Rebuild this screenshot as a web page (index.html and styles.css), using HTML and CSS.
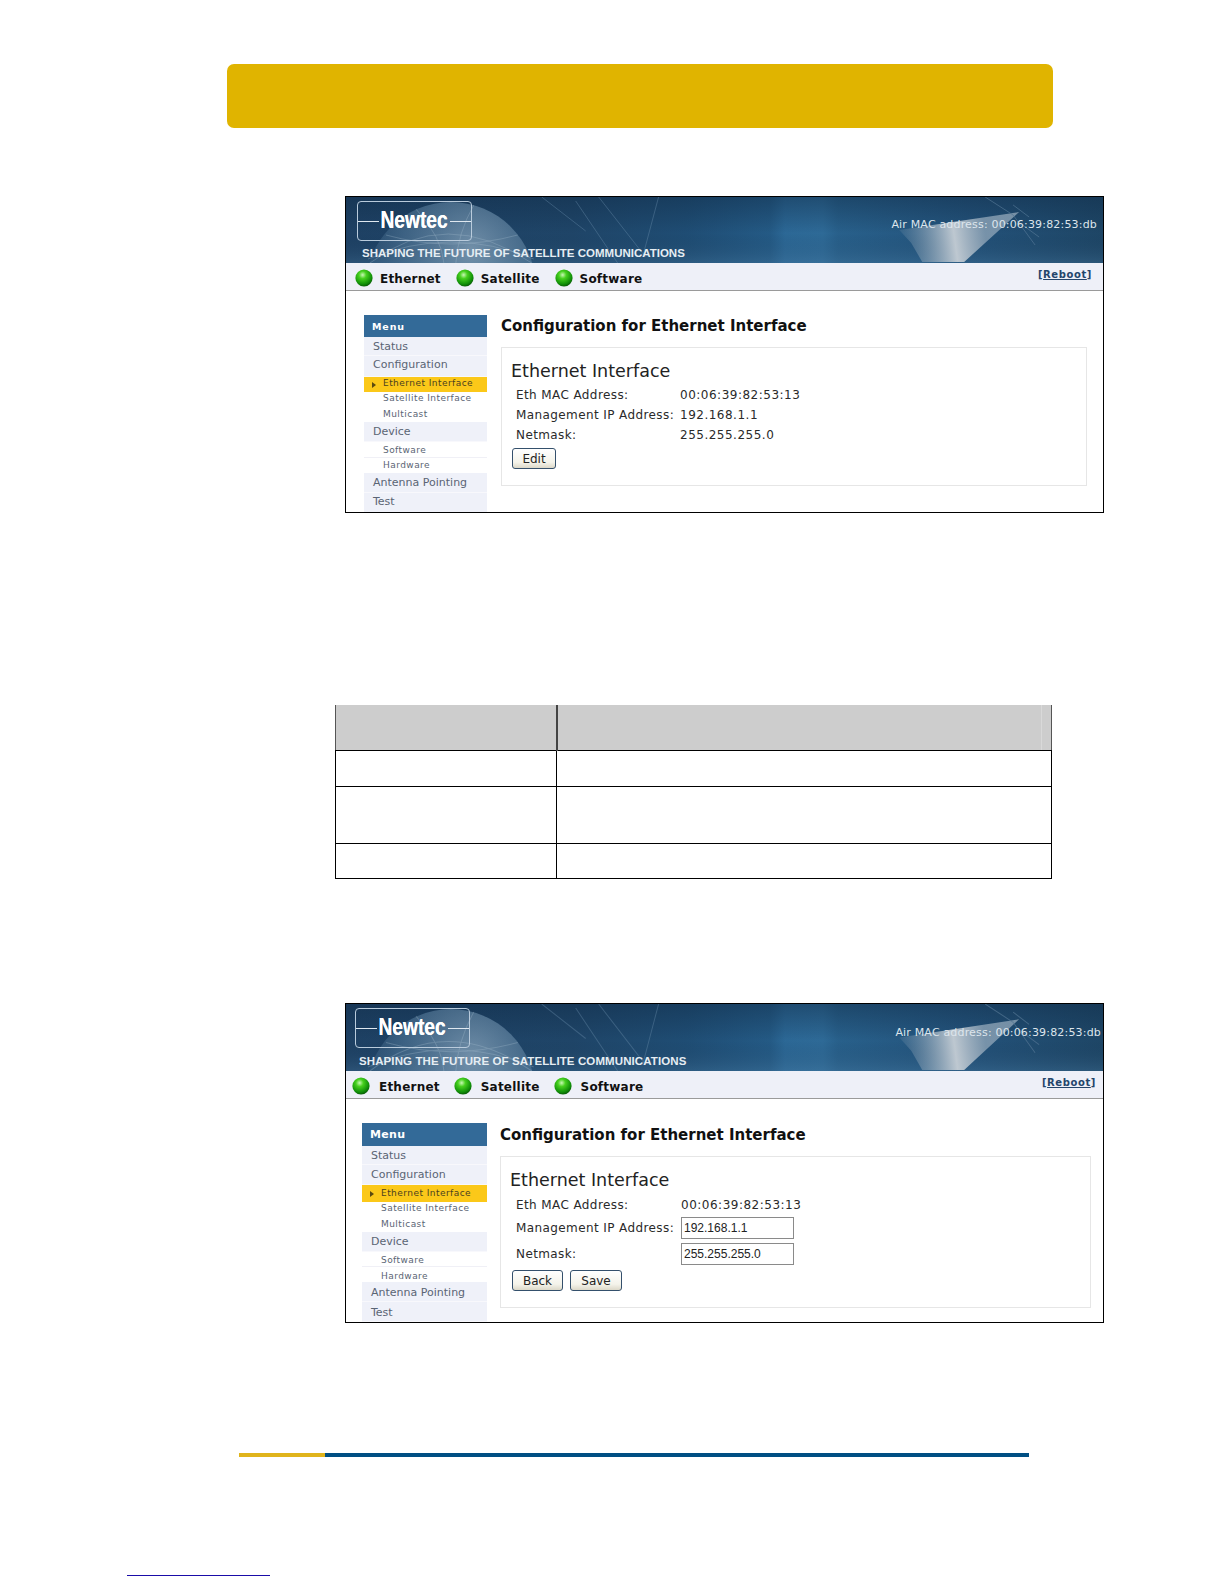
FILE: index.html
```html
<!DOCTYPE html>
<html lang="en">
<head>
<meta charset="utf-8">
<title>Configuration for Ethernet Interface</title>
<link rel="stylesheet" href="styles.css">
</head>
<body>
<svg class="defs" width="0" height="0" aria-hidden="true">
  <defs>
    <linearGradient id="bannerBg" x1="0" x2="1" y1="0" y2="0">
      <stop offset="0" stop-color="#1e4164"/>
      <stop offset=".3" stop-color="#1f4568"/>
      <stop offset=".45" stop-color="#1f4d74"/>
      <stop offset=".56" stop-color="#245a85"/>
      <stop offset=".58" stop-color="#2c6896"/>
      <stop offset=".63" stop-color="#2e6a97"/>
      <stop offset=".65" stop-color="#28608b"/>
      <stop offset=".82" stop-color="#23527a"/>
      <stop offset="1" stop-color="#1e4666"/>
    </linearGradient>
    <linearGradient id="bannerShade" x1="0" x2="0" y1="0" y2="1">
      <stop offset="0" stop-color="#0f2a45" stop-opacity=".45"/>
      <stop offset=".55" stop-color="#0f2a45" stop-opacity="0"/>
      <stop offset="1" stop-color="#4b7ba0" stop-opacity=".3"/>
    </linearGradient>
    <radialGradient id="globe" cx=".62" cy=".28" r=".75">
      <stop offset="0" stop-color="#86a2b9" stop-opacity=".8"/>
      <stop offset=".55" stop-color="#557b9b" stop-opacity=".55"/>
      <stop offset="1" stop-color="#2f5578" stop-opacity=".25"/>
    </radialGradient>
    <linearGradient id="beam" gradientUnits="userSpaceOnUse" x1="552" y1="48" x2="640" y2="36">
      <stop offset="0" stop-color="#7d98ae" stop-opacity=".1"/>
      <stop offset=".35" stop-color="#9cafbf" stop-opacity=".6"/>
      <stop offset=".65" stop-color="#c6ced5" stop-opacity=".95"/>
      <stop offset="1" stop-color="#93a8ba" stop-opacity=".75"/>
    </linearGradient>
    <radialGradient id="led" cx=".42" cy=".32" r=".72">
      <stop offset="0" stop-color="#c9f7b5"/>
      <stop offset=".3" stop-color="#46d01e"/>
      <stop offset=".75" stop-color="#108f08"/>
      <stop offset="1" stop-color="#064d06"/>
    </radialGradient>
    <symbol id="art" viewBox="0 0 758 66" preserveAspectRatio="none">
      <rect width="758" height="66" fill="url(#bannerBg)"/>
      <rect width="758" height="66" fill="url(#bannerShade)"/>
      <circle cx="105" cy="90" r="85" fill="url(#globe)"/>
      <path d="M24 66Q100 8 186 66M70 12Q96 40 98 66M128 8Q112 36 110 66M40 38Q105 56 172 38M22 62Q105 28 188 62" fill="none" stroke="#a9bfd1" stroke-opacity=".3"/>
      <path d="M253 0L300 60M313 0L297 60M230 4L272 66M196 0L240 34" fill="none" stroke="#6a8dab" stroke-opacity=".4"/>
      <polygon points="674,15 554,33 566,46 577,65 619,65" fill="url(#beam)"/>
      <path d="M640 0l28 18 22 30M668 8l16 12M672 24l22 16" fill="none" stroke="#527593" stroke-opacity=".7"/>
    </symbol>
    <symbol id="bulb" viewBox="0 0 18 18">
      <circle cx="9" cy="9" r="8.6" fill="url(#led)"/>
    </symbol>
  </defs>
</svg>

<main class="page">
  <header class="title-band"></header>

  <section class="shot shot-a">
    <div class="banner">
      <svg class="banner-art" aria-hidden="true"><use href="#art"/></svg>
      <div class="logo"><span class="logo-word">Newtec</span></div>
      <p class="tagline">SHAPING THE FUTURE OF SATELLITE COMMUNICATIONS</p>
      <p class="air-mac">Air MAC address: 00:06:39:82:53:db</p>
    </div>
    <nav class="status-bar">
      <span class="led"><svg class="bulb" aria-hidden="true"><use href="#bulb"/></svg>Ethernet</span>
      <span class="led"><svg class="bulb" aria-hidden="true"><use href="#bulb"/></svg>Satellite</span>
      <span class="led"><svg class="bulb" aria-hidden="true"><use href="#bulb"/></svg>Software</span>
      <a class="reboot">[<u>Reboot</u>]</a>
    </nav>
    <div class="content">
      <ul class="menu">
        <li class="menu-head">Menu</li>
        <li class="menu-main">Status</li>
        <li class="menu-main">Configuration</li>
        <li class="menu-sub is-active">Ethernet Interface</li>
        <li class="menu-sub">Satellite Interface</li>
        <li class="menu-sub">Multicast</li>
        <li class="menu-main">Device</li>
        <li class="menu-sub">Software</li>
        <li class="menu-sub">Hardware</li>
        <li class="menu-main">Antenna Pointing</li>
        <li class="menu-main">Test</li>
      </ul>
      <div class="pane">
        <h1 class="pane-title">Configuration for Ethernet Interface</h1>
        <div class="card">
          <h2 class="card-title">Ethernet Interface</h2>
          <dl class="fields">
            <dt>Eth MAC Address:</dt><dd>00:06:39:82:53:13</dd>
            <dt>Management IP Address:</dt><dd>192.168.1.1</dd>
            <dt>Netmask:</dt><dd>255.255.255.0</dd>
          </dl>
          <div class="actions"><button class="btn btn-edit" type="button">Edit</button></div>
        </div>
      </div>
    </div>
  </section>

  <table class="grid-table">
    <colgroup><col class="col-a"><col class="col-b"></colgroup>
    <thead><tr class="row-head"><th></th><th></th></tr></thead>
    <tbody>
      <tr class="row-1"><td></td><td></td></tr>
      <tr class="row-2"><td></td><td></td></tr>
      <tr class="row-3"><td></td><td></td></tr>
    </tbody>
  </table>

  <section class="shot shot-b">
    <div class="banner">
      <svg class="banner-art" aria-hidden="true"><use href="#art"/></svg>
      <div class="logo"><span class="logo-word">Newtec</span></div>
      <p class="tagline">SHAPING THE FUTURE OF SATELLITE COMMUNICATIONS</p>
      <p class="air-mac">Air MAC address: 00:06:39:82:53:db</p>
    </div>
    <nav class="status-bar">
      <span class="led"><svg class="bulb" aria-hidden="true"><use href="#bulb"/></svg>Ethernet</span>
      <span class="led"><svg class="bulb" aria-hidden="true"><use href="#bulb"/></svg>Satellite</span>
      <span class="led"><svg class="bulb" aria-hidden="true"><use href="#bulb"/></svg>Software</span>
      <a class="reboot">[<u>Reboot</u>]</a>
    </nav>
    <div class="content">
      <ul class="menu">
        <li class="menu-head">Menu</li>
        <li class="menu-main">Status</li>
        <li class="menu-main">Configuration</li>
        <li class="menu-sub is-active">Ethernet Interface</li>
        <li class="menu-sub">Satellite Interface</li>
        <li class="menu-sub">Multicast</li>
        <li class="menu-main">Device</li>
        <li class="menu-sub">Software</li>
        <li class="menu-sub">Hardware</li>
        <li class="menu-main">Antenna Pointing</li>
        <li class="menu-main">Test</li>
      </ul>
      <div class="pane">
        <h1 class="pane-title">Configuration for Ethernet Interface</h1>
        <div class="card">
          <h2 class="card-title">Ethernet Interface</h2>
          <dl class="fields">
            <dt>Eth MAC Address:</dt><dd>00:06:39:82:53:13</dd>
            <dt>Management IP Address:</dt><dd><input class="field-input" type="text" value="192.168.1.1"></dd>
            <dt>Netmask:</dt><dd><input class="field-input" type="text" value="255.255.255.0"></dd>
          </dl>
          <div class="actions">
            <button class="btn btn-back" type="button">Back</button>
            <button class="btn btn-save" type="button">Save</button>
          </div>
        </div>
      </div>
    </div>
  </section>

  <div class="footer-rule"><span class="rule-gold"></span><span class="rule-blue"></span></div>
  <div class="footnote-link"></div>
</main>
</body>
</html>
```

FILE: styles.css
```css
* { box-sizing: border-box; }
html, body { margin: 0; padding: 0; background: #fff; }
body { font-family: "DejaVu Sans", Verdana, sans-serif; color: #222; }
.defs { position: absolute; }
.page { width: 1224px; height: 1584px; overflow: hidden; padding-top: 64px; }

.title-band {
  width: 826px; height: 64px; margin-left: 227px;
  background: #e0b400; border-radius: 7px;
}

/* screenshots */
.shot {
  width: 759px; margin-left: 345px;
  border: 1px solid #000; overflow: hidden; background: #fff;
  display: flex; flex-direction: column;
}
.shot-a { height: 317px; margin-top: 68px; }
.shot-b { height: 320px; margin-top: 124px; }

.banner { position: relative; height: 66px; flex: none; color: #fff; }
.shot-b .banner { height: 67px; }
.banner-art { position: absolute; inset: 0; width: 100%; height: 100%; }
.logo {
  position: absolute; left: 11px; top: 4px; width: 115px; height: 40px;
  border: 1px solid #b9cbdc; border-radius: 4px;
  display: flex; align-items: center; justify-content: center;
}
.shot-b .logo { left: 9px; top: 4px; }
.logo::before, .logo::after { content: ""; flex: 1; height: 1px; background: #dfe8f0; }
.logo-word {
  font: bold 24px/1 "Liberation Sans", Arial, sans-serif;
  letter-spacing: 0; color: #fff; transform: translateY(-1px) scaleX(.8);
  margin: 0 -7px; text-shadow: 0 0 .6px #fff;
}
.tagline {
  position: absolute; left: 16px; top: 49px; margin: 0;
  font: bold 11.5px/14px "Liberation Sans", Arial, sans-serif;
  color: #e6edf3; white-space: nowrap;
}
.shot-b .tagline { left: 13px; top: 50px; letter-spacing: .1px; }
.air-mac {
  position: absolute; right: 6px; top: 21px; margin: 0;
  font-size: 11px; line-height: 14px; color: #dde5ec; white-space: nowrap;
  letter-spacing: .18px;
}
.shot-b .air-mac { right: 2px; top: 22px; }

.status-bar {
  height: 28px; flex: none; display: flex; align-items: center;
  padding: 4px 0 0 9px; background: #eef0f8; border-bottom: 1px solid #9a9a9a;
  font-size: 12px; font-weight: 600; color: #111;
}
.shot-b .status-bar { padding-left: 6px; }
.led { display: flex; align-items: center; gap: 7px; margin-right: 15px; letter-spacing: .22px; }
.shot-b .led { gap: 9px; margin-right: 14px; }
.bulb { width: 18px; height: 18px; flex: none; margin-bottom: 2px; }
.reboot {
  margin-left: auto; margin-right: 11px; margin-top: -8px;
  font-size: 10px; font-weight: 600; color: #24456b; letter-spacing: .6px;
}
.shot-b .reboot { margin-right: 7px; }

.content { display: flex; flex: 1; min-height: 0; padding: 24px 0 0 18px; gap: 14px; }
.shot-b .content { padding-left: 16px; gap: 13px; }

.menu { list-style: none; margin: 0; padding: 0; width: 123px; flex: none; color: #5a6474; }
.shot-b .menu { width: 125px; }
.menu li { display: flex; align-items: center; white-space: nowrap; }
.menu-head {
  height: 22px; padding-left: 8px; background: #336a98;
  color: #fff; font-size: 9.5px; font-weight: 700; letter-spacing: .9px;
}
.menu-main {
  height: 20px; padding: 0 0 1px 9px; font-size: 11px;
  background: #eff1f9; border-bottom: 1px solid #f8f8fc;
}
.menu-sub { height: 15px; padding: 0 0 2px 19px; font-size: 9px; letter-spacing: .45px; background: #fff; }
.menu li.menu-main:nth-child(2) { height: 19px; padding-bottom: 0; }
.menu li.menu-main:nth-child(3) { height: 21px; padding-bottom: 3px; }
.menu li.menu-main:nth-child(11) { height: 20px; padding-bottom: 2px; }
.menu li.menu-sub:nth-child(4), .menu li.menu-sub:nth-child(5) { padding-bottom: 4px; }
.menu li.menu-sub:nth-child(8) { height: 16px; padding-bottom: 0; border-bottom: 1px solid #f0f0f6; }
.menu li.menu-sub:nth-child(9) { padding-bottom: 1px; }
.shot-b .menu-head { height: 23px; font-size: 11px; letter-spacing: .3px; }
.shot-b .menu li.menu-main:nth-child(3) { height: 20px; padding-bottom: 1px; }
.shot-b .menu li.menu-sub.is-active { height: 17px; padding-bottom: 1px; }
.shot-b .menu li.menu-sub:nth-child(8) { height: 15px; padding: 2px 0 0 19px; }
.shot-b .menu li.menu-sub:nth-child(9) { padding: 2px 0 0 19px; }
.shot-b .menu li.menu-main:nth-child(10) { padding: 1px 0 0 9px; }
.shot-b .menu li.menu-main:nth-child(11) { height: 20px; padding: 1px 0 0 9px; }
.menu-sub.is-active { position: relative; background: #fbc819; color: #4a4020; }
.menu-sub.is-active::before {
  content: ""; position: absolute; left: 8px; top: 50%; margin-top: -3px;
  border-left: 4px solid #5b4a10; border-top: 3px solid transparent; border-bottom: 3px solid transparent;
}

.pane { flex: none; }
.pane-title {
  margin: 0; height: 22px; font-size: 15px; line-height: 22px; font-weight: 700; color: #111;
  white-space: nowrap;
}
.shot-b .pane-title { height: 23px; line-height: 25px; }
.card {
  margin-top: 10px; width: 586px; height: 139px;
  border: 1px solid #e6e6e6; padding: 11px 0 0 9px;
}
.shot-b .card { width: 591px; height: 152px; }
.card-title { margin: 0; font-size: 17.5px; line-height: 24px; font-weight: 400; color: #222; }
.fields {
  display: grid; grid-template-columns: 164px 1fr; grid-auto-rows: 20px; align-items: center;
  margin: 2px 0 0 5px; font-size: 12px; color: #2a2a2a;
}
.shot-b .fields { grid-template-rows: 21px 26px 26px; grid-template-columns: 165px 1fr; margin-left: 6px; }
.fields dt, .fields dd { margin: 0; white-space: nowrap; }
.fields dt { letter-spacing: .4px; }
.fields dd { letter-spacing: .5px; }
.field-input {
  display: block; width: 113px; height: 22px; padding: 0 2px; margin: 0;
  border: 1px solid #8a8a8a; background: #fff; color: #222;
  font: 12px "Liberation Sans", Arial, sans-serif;
}
.actions { display: flex; gap: 7px; margin: 3px 0 0 1px; }
.shot-b .actions { margin-left: 2px; }
.btn {
  height: 21px; padding: 0; border: 1px solid #34506c; border-radius: 3px;
  background: linear-gradient(#ffffff, #f4f3ea 70%, #dcd8c8);
  font: 12px "DejaVu Sans", Verdana, sans-serif; color: #222;
}
.btn-edit { width: 44px; }
.btn-back { width: 51px; }
.btn-save { width: 52px; }

/* empty parameter table */
.grid-table {
  width: 717px; height: 174px; margin: 192px 0 0 335px;
  border-collapse: collapse; table-layout: fixed;
}
.col-a { width: 221px; }
.grid-table th, .grid-table td { padding: 0; border: 1px solid #000; }
.grid-table th {
  background: #cdcdcd; border-top: 0;
  border-left-color: #555; border-right-color: #555;
}
.grid-table th + th {
  border-left: 2px solid #444;
  box-shadow: inset -9px 0 0 #cdcdcd, inset -10px 0 0 #d9d9d9;
}
.row-head { height: 45px; }
.row-1 { height: 36px; }
.row-2 { height: 57px; }
.row-3 { height: 35px; }

.footer-rule { display: flex; height: 4px; margin: 130px 0 0 239px; width: 790px; }
.rule-gold { width: 86px; background: #e0b41c; }
.rule-blue { flex: 1; background: #004f83; }
.footnote-link { width: 143px; height: 1px; margin: 118px 0 0 127px; background: #1a0ca8; }
```
